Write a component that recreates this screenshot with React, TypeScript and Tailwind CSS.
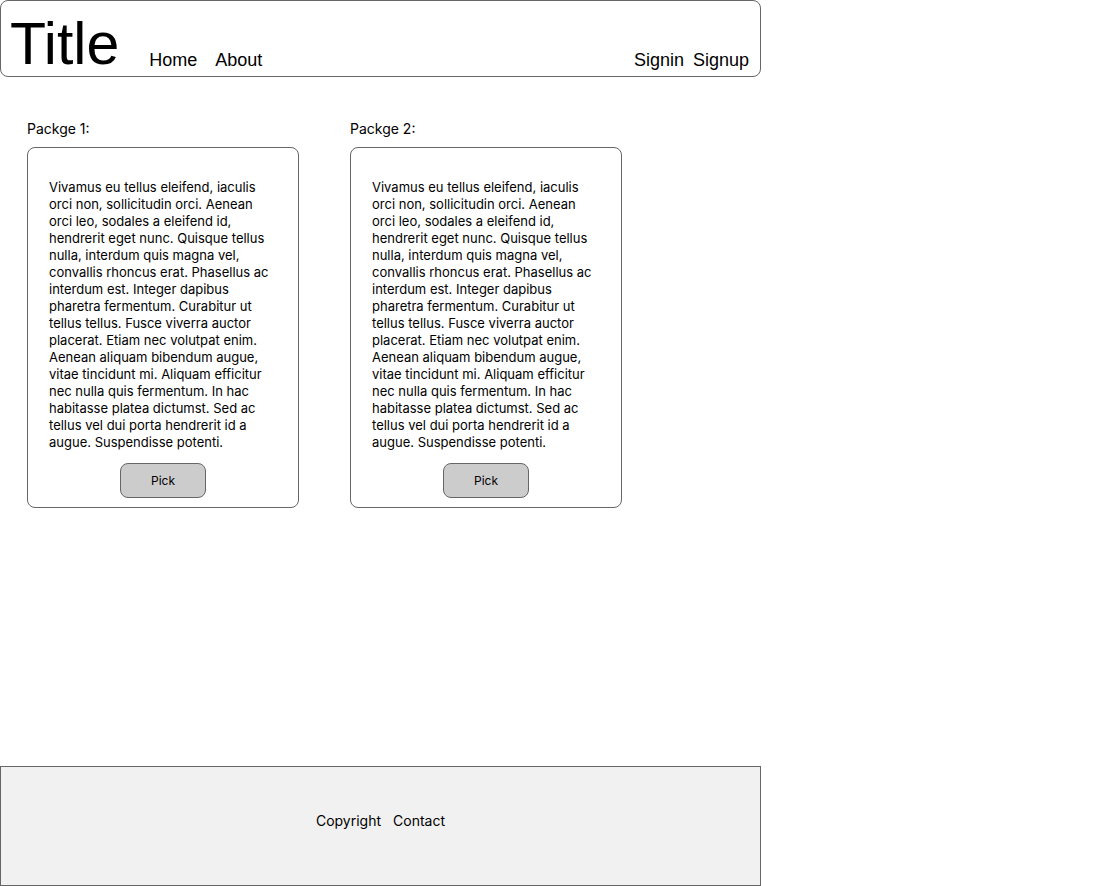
const lorem =
  "Vivamus eu tellus eleifend, iaculis orci non, sollicitudin orci. Aenean orci leo, sodales a eleifend id, hendrerit eget nunc. Quisque tellus nulla, interdum quis magna vel, convallis rhoncus erat. Phasellus ac interdum est. Integer dapibus pharetra fermentum. Curabitur ut tellus tellus. Fusce viverra auctor placerat. Etiam nec volutpat enim. Aenean aliquam bibendum augue, vitae tincidunt mi. Aliquam efficitur nec nulla quis fermentum. In hac habitasse platea dictumst. Sed ac tellus vel dui porta hendrerit id a augue. Suspendisse potenti.";

interface PackageCardProps {
  label: string;
}

function PackageCard({ label }: PackageCardProps) {
  return (
    <div className="w-[272px]">
      <div className="text-[14px] leading-[17px] mb-[10px]">{label}</div>
      <div className="border border-[#666] rounded-[8px] pt-[31px] pb-[9px] px-[21px] flex flex-col items-center">
        <p className="text-[13px] leading-[17px] w-full">{lorem}</p>
        <button className="mt-[12px] w-[86px] h-[35px] bg-[#cccccc] border border-[#666] rounded-[8px] text-[12px]">
          Pick
        </button>
      </div>
    </div>
  );
}

export default function App() {
  return (
    <div
      className="h-screen w-[761px] flex flex-col text-black bg-white"
      style={{ fontFamily: "Inter, sans-serif" }}
    >
      <header
        className="h-[77px] border border-[#666] rounded-[8px] flex items-end px-[9px]"
        style={{ fontFamily: '"Liberation Sans", Arial, sans-serif' }}
      >
        <div className="text-[59px] leading-none pb-[2px]">Title</div>
        <nav className="flex gap-[18px] text-[18px] leading-none ml-[30px] pb-[7px]">
          <a>Home</a>
          <a>About</a>
        </nav>
        <nav className="flex gap-[9px] text-[18px] leading-none ml-auto pr-[2px] pb-[7px]">
          <a>Signin</a>
          <a>Signup</a>
        </nav>
      </header>

      <main className="flex gap-[51px] pt-[43px] pl-[27px]">
        <PackageCard label="Packge 1:" />
        <PackageCard label="Packge 2:" />
      </main>

      <footer className="mt-auto h-[120px] bg-[#f1f1f1] border border-[#666] flex items-center justify-center gap-[12px] text-[14px] pb-[12px]">
        <span>Copyright</span>
        <span>Contact</span>
      </footer>
    </div>
  );
}
